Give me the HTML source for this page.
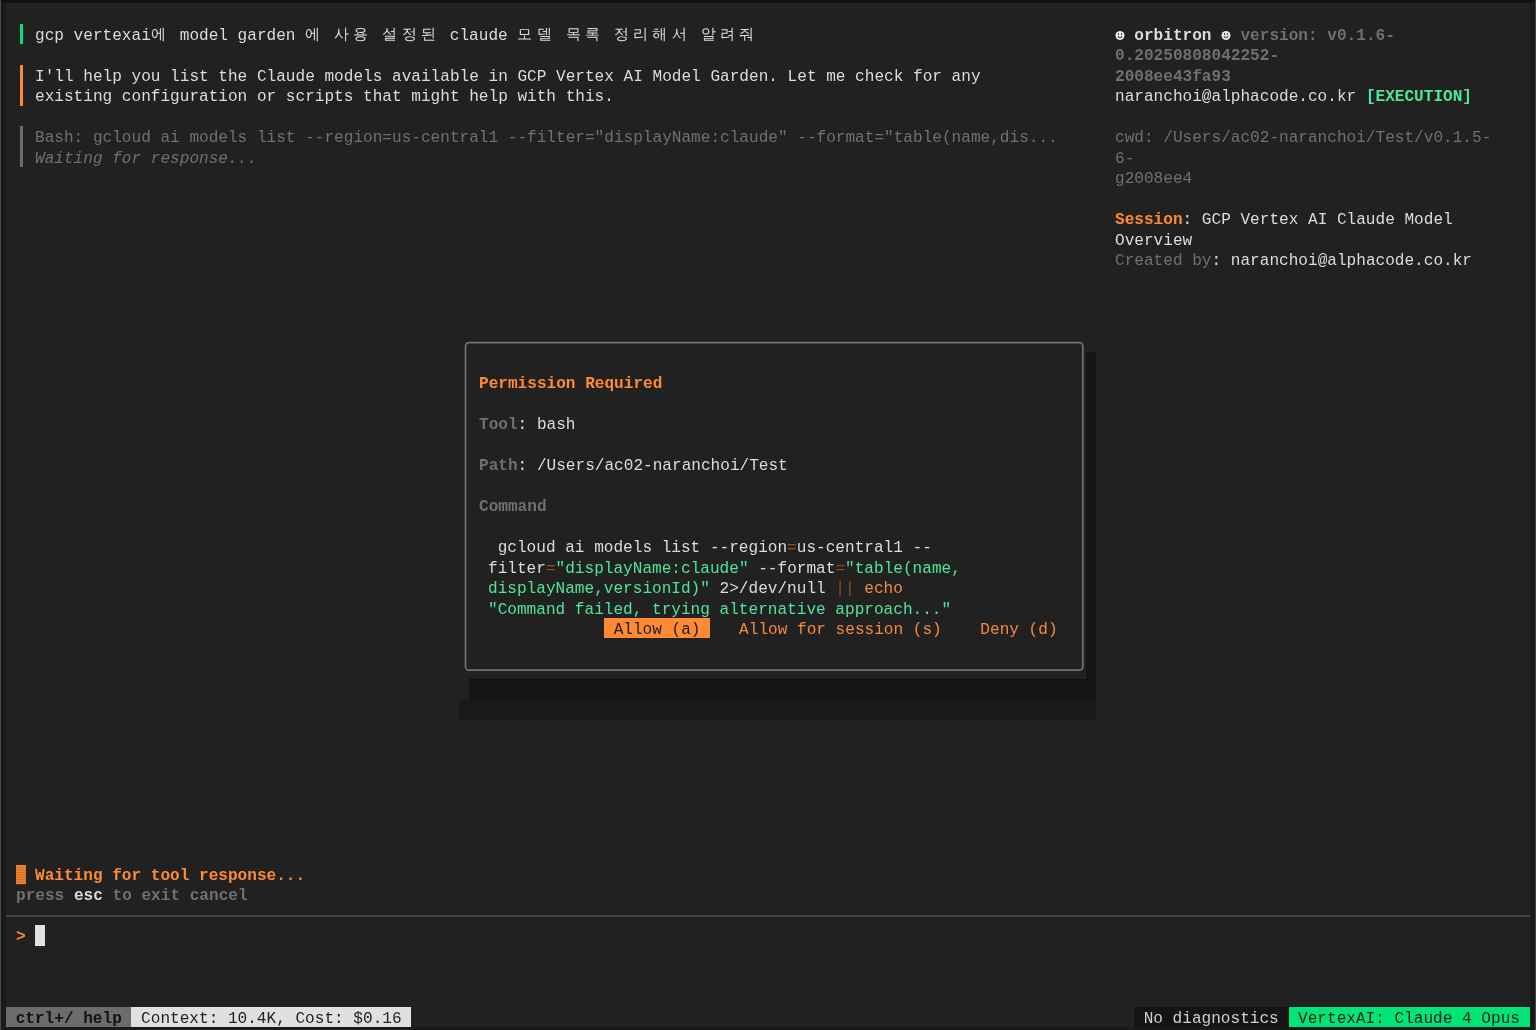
<!DOCTYPE html>
<html><head><meta charset="utf-8"><style>
html,body{margin:0;padding:0;}
body{width:1536px;height:1030px;overflow:hidden;background:#1a1a1a;position:relative;}
#edgeL{position:absolute;left:0;top:0;width:1.2px;height:1030px;background:#4a4a4a;}
#edgeR{position:absolute;left:1535px;top:0;width:1px;height:1030px;background:#444;}
#top{position:absolute;left:0;top:0;width:1536px;height:3px;background:#111;}
#term{position:absolute;left:6.0px;top:3.45px;width:1524px;height:1024px;background:#212121;overflow:hidden;
 font-family:"Liberation Mono",monospace;font-size:16.086px;}
.t{position:absolute;white-space:pre;will-change:transform;height:20.485px;line-height:20.485px;color:#dcdcdc;}
.fg{color:#dcdcdc}
.mu{color:#707070}
.it{font-style:italic}
.b{font-weight:bold}
.gr{color:#4ee59a}
.or{color:#ff8a33}
.or2{color:#f48a3c}
.dor{color:#8a5028}
.cg{color:#4ee59a}
.btn{color:#1d1d1d}
.k{display:inline-block;width:19.290px;font-size:15px;position:relative;top:-0.6px}
.sm{display:inline-block;width:9.645px;position:relative;}
.sm svg{position:absolute;left:-0.4px;top:-9.3px}
.sb1{color:#111}
.sb2{color:#222}
.sb3{color:#cfcfcf}
.sb4{color:#1e1e1e}
</style></head><body>
<div id="top"></div><div id="edgeL"></div><div id="edgeR"></div>
<div id="term">
<div style="position:absolute;left:14.1px;top:20.59px;width:3px;height:20.29px;background:#00e676;"></div>
<div class="t fg" style="left:28.935px;top:22.485px;">gcp vertexai<span class="k">에</span> model garden <span class="k">에</span> <span class="k">사</span><span class="k">용</span> <span class="k">설</span><span class="k">정</span><span class="k">된</span> claude <span class="k">모</span><span class="k">델</span> <span class="k">목</span><span class="k">록</span> <span class="k">정</span><span class="k">리</span><span class="k">해</span><span class="k">서</span> <span class="k">알</span><span class="k">려</span><span class="k">줘</span></div>
<div style="position:absolute;left:14.1px;top:61.55px;width:3px;height:40.77px;background:#ff8a33;"></div>
<div class="t fg" style="left:28.935px;top:63.455px;">I'll help you list the Claude models available in GCP Vertex AI Model Garden. Let me check for any</div>
<div class="t fg" style="left:28.935px;top:83.940px;">existing configuration or scripts that might help with this.</div>
<div style="position:absolute;left:14.1px;top:123.01px;width:3px;height:40.77px;background:#6c6c6c;"></div>
<div class="t mu" style="left:28.935px;top:124.910px;">Bash: gcloud ai models list --region=us-central1 --filter="displayName:claude" --format="table(name,dis...</div>
<div class="t mu it" style="left:28.935px;top:145.395px;">Waiting for response...</div>
<div class="t " style="left:1109.175px;top:22.485px;"><span class="sm"><svg width="10" height="10" viewBox="0 0 10 10" style="overflow:visible"><circle cx="5" cy="4.45" r="4.55" fill="#e6e6e6"/><ellipse cx="3.5" cy="3.05" rx="0.6" ry="0.95" fill="#3a3a3a"/><ellipse cx="6.5" cy="3.05" rx="0.6" ry="0.95" fill="#3a3a3a"/><path d="M2.9 5.15 Q5 7.9 7.1 5.15" stroke="#4a4a4a" stroke-width="1.05" fill="none"/></svg></span> <span class="fg b">orbitron</span> <span class="sm"><svg width="10" height="10" viewBox="0 0 10 10" style="overflow:visible"><circle cx="5" cy="4.45" r="4.55" fill="#e6e6e6"/><ellipse cx="3.5" cy="3.05" rx="0.6" ry="0.95" fill="#3a3a3a"/><ellipse cx="6.5" cy="3.05" rx="0.6" ry="0.95" fill="#3a3a3a"/><path d="M2.9 5.15 Q5 7.9 7.1 5.15" stroke="#4a4a4a" stroke-width="1.05" fill="none"/></svg></span> <span class="mu b">version: v0.1.6-</span></div>
<div class="t " style="left:1109.175px;top:42.970px;"><span class="mu b">0.20250808042252-</span></div>
<div class="t " style="left:1109.175px;top:63.455px;"><span class="mu b">2008ee43fa93</span></div>
<div class="t " style="left:1109.175px;top:83.940px;"><span class="fg">naranchoi@alphacode.co.kr</span> <span class="gr b">[EXECUTION]</span></div>
<div class="t " style="left:1109.175px;top:124.910px;"><span class="mu">cwd: /Users/ac02-naranchoi/Test/v0.1.5-</span></div>
<div class="t " style="left:1109.175px;top:145.395px;"><span class="mu">6-</span></div>
<div class="t " style="left:1109.175px;top:165.880px;"><span class="mu">g2008ee4</span></div>
<div class="t " style="left:1109.175px;top:206.850px;"><span class="or b">Session</span><span class="fg">: GCP Vertex AI Claude Model</span></div>
<div class="t " style="left:1109.175px;top:227.335px;"><span class="fg">Overview</span></div>
<div class="t " style="left:1109.175px;top:247.820px;"><span class="mu">Created by</span><span class="fg">: naranchoi@alphacode.co.kr</span></div>
<div style="position:absolute;left:1080.24px;top:348.25px;width:9.64px;height:327.76px;background:#141414;"></div>
<div style="position:absolute;left:462.96px;top:676.00px;width:626.92px;height:20.48px;background:#151515;"></div>
<div style="position:absolute;left:462.96px;top:676.00px;width:626.92px;height:2px;background:#101010;"></div>
<div style="position:absolute;left:453.31px;top:696.49px;width:636.57px;height:20.48px;background:#191919;"></div>
<svg style="position:absolute;left:455px;top:335px" width="630" height="340"><rect x="4.5" y="4.55" width="617.3" height="327.6" rx="3.5" fill="none" stroke="#727272" stroke-width="1.7"/></svg>
<div class="t " style="left:472.605px;top:370.730px;"><span class="or b">Permission Required</span></div>
<div class="t " style="left:472.605px;top:411.700px;"><span class="mu b">Tool</span><span class="fg">: bash</span></div>
<div class="t " style="left:472.605px;top:452.670px;"><span class="mu b">Path</span><span class="fg">: /Users/ac02-naranchoi/Test</span></div>
<div class="t " style="left:472.605px;top:493.640px;"><span class="mu b">Command</span></div>
<div class="t " style="left:482.250px;top:534.610px;"><span class="fg"> gcloud ai models list --region</span><span class="dor">=</span><span class="fg">us-central1 --</span></div>
<div class="t " style="left:482.250px;top:555.095px;"><span class="fg">filter</span><span class="dor">=</span><span class="cg">"displayName:claude"</span><span class="fg"> --format</span><span class="dor">=</span><span class="cg">"table(name,</span></div>
<div class="t " style="left:482.250px;top:575.580px;"><span class="cg">displayName,versionId)"</span><span class="fg"> 2&gt;/dev/null </span><span class="dor">||</span><span class="or2"> echo</span></div>
<div class="t " style="left:482.250px;top:596.065px;"><span class="cg">"Command failed, trying alternative approach..."</span></div>
<div style="position:absolute;left:597.990px;top:614.550px;width:106.095px;height:20.485px;background:#ff8a33"></div>
<div class="t " style="left:597.990px;top:616.550px;"><span class="btn"> Allow (a) </span>  <span class="or2"> Allow for session (s) </span>  <span class="or2"> Deny (d) </span></div>
<svg style="position:absolute;left:9.95px;top:861.77px" width="10" height="20" viewBox="0 0 10 20"><rect x="0" y="0" width="9.9" height="19.2" fill="#f08230"/><rect x="0" y="2.30" width="9.9" height="0.6" fill="#9a5424" opacity="0.55"/><rect x="0" y="4.70" width="9.9" height="0.6" fill="#9a5424" opacity="0.55"/><rect x="0" y="7.10" width="9.9" height="0.6" fill="#9a5424" opacity="0.55"/><rect x="0" y="9.50" width="9.9" height="0.6" fill="#9a5424" opacity="0.55"/><rect x="0" y="11.90" width="9.9" height="0.6" fill="#9a5424" opacity="0.55"/><rect x="0" y="14.30" width="9.9" height="0.6" fill="#9a5424" opacity="0.55"/><rect x="0" y="16.70" width="9.9" height="0.6" fill="#9a5424" opacity="0.55"/></svg>
<div class="t " style="left:28.935px;top:862.370px;"><span class="or b">Waiting for tool response...</span></div>
<div class="t " style="left:9.645px;top:882.855px;"><span class="mu b">press </span><span class="fg b">esc</span><span class="mu b"> to exit cancel</span></div>
<div style="position:absolute;left:0px;top:911.84px;width:1524px;height:2px;background:#3b424a;"></div>
<div class="t " style="left:9.645px;top:923.825px;"><span class="or b">&gt;</span></div>
<div style="position:absolute;left:28.93px;top:921.82px;width:9.64px;height:20.48px;background:#e2e2e2;"></div>
<div style="position:absolute;left:0.000px;top:1003.765px;width:125.385px;height:20.485px;background:#6c6c6c"></div>
<div style="position:absolute;left:125.385px;top:1003.765px;width:279.705px;height:20.485px;background:#e0e0e0"></div>
<div style="position:absolute;left:1128.465px;top:1003.765px;width:154.320px;height:20.485px;background:#141414"></div>
<div style="position:absolute;left:1282.785px;top:1003.765px;width:241.125px;height:20.485px;background:#00e676"></div>
<div class="t " style="left:0.000px;top:1005.765px;"><span class="sb1 b"> ctrl+/ help </span><span class="sb2"> Context: 10.4K, Cost: $0.16 </span></div>
<div class="t " style="left:1128.465px;top:1005.765px;"><span class="sb3"> No diagnostics </span><span class="sb4"> VertexAI: Claude 4 Opus </span></div>
</div>
</body></html>
